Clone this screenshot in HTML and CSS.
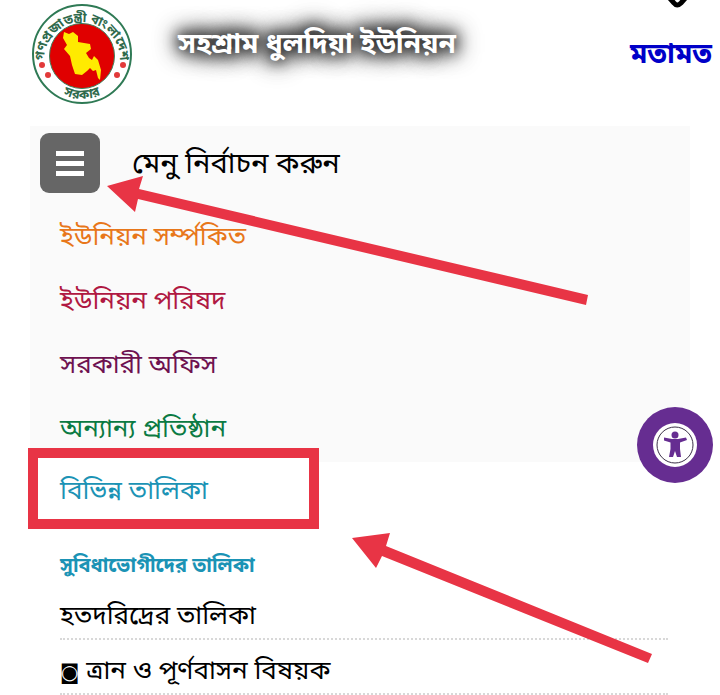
FILE: index.html
```
<!DOCTYPE html>
<html lang="bn">
<head>
    <meta charset="UTF-8">
    <meta name="viewport" content="width=device-width, initial-scale=1.0">
    <title>সহশ্রাম ধুলদিয়া ইউনিয়ন</title>
    <link rel="stylesheet" href="styles.css">
</head>
<body>
    <header class="site-header">
        <svg class="logo" viewBox="0 0 100 100" aria-hidden="true">
            <defs>
                <path id="arc-top" d="M12 56 A38 38 0 1 1 88 56"/>
                <path id="arc-bottom" d="M18 81 A44 44 0 0 0 82 81"/>
            </defs>
            <circle cx="50" cy="50" r="49" fill="#fff" stroke="#2f7a55" stroke-width="2"/>
            <circle cx="50" cy="52" r="32.500" fill="#e00000" stroke="#3f8560" stroke-width="1"/>
            <path d="M32 28 L37 30 L41 28 L46 32 L46 38 L58 40 L59 45 L54 49 L57 54 L60 56 L62 52 L66 56 L69 66 L68 76 L66 74 L64 66 L61 67 L58 64 L55 67 L50 71 L43 70 L40 61 L38 52 L32 45 L35 41 L31 34 Z" fill="#ffea00"/>
            <text class="logo-text" text-anchor="middle"><textPath href="#arc-top" startOffset="50%">গণপ্রজাতন্ত্রী বাংলাদেশ</textPath></text>
            <text class="logo-text" text-anchor="middle"><textPath href="#arc-bottom" startOffset="50%">সরকার</textPath></text>
            <g fill="#e23a3a">
                <circle cx="10" cy="61" r="3"/>
                <circle cx="16" cy="71" r="3"/>
                <circle cx="91" cy="61" r="3"/>
                <circle cx="85" cy="71" r="3"/>
            </g>
        </svg>
        <h1 class="site-title">সহশ্রাম ধুলদিয়া ইউনিয়ন</h1>
        <div class="feedback">
            <svg class="feedback-icon" viewBox="0 0 28 10" aria-hidden="true">
                <path d="M4 -6 L12 3 Q15 7 19 3 L27 -6" fill="none" stroke="#000" stroke-width="5"/>
            </svg>
            <a class="feedback-link" href="#">মতামত</a>
        </div>
    </header>

    <nav class="menu">
        <div class="menu-bar">
            <button class="menu-toggle" id="menu-toggle" type="button" aria-label="মেনু">
                <span class="line"></span>
                <span class="line"></span>
                <span class="line"></span>
            </button>
            <label class="menu-label" for="menu-toggle">মেনু নির্বাচন করুন</label>
            <svg class="arrow arrow-menu" viewBox="107 176 482 130" aria-hidden="true">
                <path d="M107 186 L143 176 L139 189 L588 295 L586 305 L138 199 L135 212 Z"/>
            </svg>
        </div>
        <ul class="menu-list">
            <li><a class="orange" href="#">ইউনিয়ন সর্ম্পকিত</a></li>
            <li><a class="red" href="#">ইউনিয়ন পরিষদ</a></li>
            <li><a class="purple" href="#">সরকারী অফিস</a></li>
            <li><a class="green" href="#">অন্যান্য প্রতিষ্ঠান</a></li>
        </ul>
    </nav>

    <section class="submenu">
        <div class="selected"><a class="blue" href="#">বিভিন্ন তালিকা</a></div>
        <h2 class="submenu-title">সুবিধাভোগীদের তালিকা</h2>
        <ul class="submenu-list">
            <li><a href="#">হতদরিদ্রের তালিকা</a></li>
            <li><a href="#"><span class="bullet">◙</span> ত্রান ও পূর্ণবাসন বিষয়ক</a></li>
        </ul>
        <svg class="arrow arrow-list" viewBox="352 533 300 130" aria-hidden="true">
            <path d="M352 538 L390 533 L386 546 L652 654 L648 663 L382 556 L376 568 Z"/>
        </svg>
    </section>

    <button class="accessibility" type="button" aria-label="Accessibility">
        <svg viewBox="0 0 44 44" aria-hidden="true">
            <circle cx="22" cy="22" r="22" fill="#fff"/>
            <circle cx="22" cy="22" r="18" fill="none" stroke="#3c3148" stroke-width="1"/>
            <circle cx="22" cy="12" r="3.500" fill="#662d91"/>
            <path d="M11 14.500 L19 16 H25 L33 14.500 L34 17 L27 19.500 V26 L28 34 L24 34 L22 28 L20 34 L16 34 L17.500 26 V19.500 L11 17.500 Z" fill="#662d91"/>
        </svg>
    </button>
</body>
</html>
```
FILE: styles.css
```
*,
*::before {
    margin: 0;
    padding: 0;
    box-sizing: border-box;
}

body {
    position: relative;
    background-color: #fff;
    color: #000;
    font-family: "Noto Sans Bengali", "Noto Sans", sans-serif;
    font-size: 26px;
    line-height: 40px;
}

a {
    color: inherit;
    text-decoration: none;
}

ul {
    list-style: none;
}

.site-header {
    display: flex;
    align-items: flex-start;
    height: 126px;
    padding: 0 8px 0 32px;
}

.logo {
    width: 100px;
    height: 100px;
    margin-top: 4px;
    overflow: visible;
}

.logo-text {
    font-size: 13px;
    font-weight: bold;
    fill: #2f6a4c;
}

.site-title {
    flex: 1;
    margin: 26px 0 0 46px;
    font-size: 28px;
    line-height: 40px;
    color: #fff;
    text-shadow: 0 0 14px #000, 0 0 22px #000, 0 0 26px #333;
}

.feedback {
    display: flex;
    flex-direction: column;
    align-items: center;
    gap: 26px;
}

.feedback-icon {
    width: 28px;
    height: 10px;
    margin-left: 10px;
}

.feedback-link {
    color: #0000c8;
    font-size: 28px;
    font-weight: bold;
}

.menu {
    height: 336px;
    margin: 0 30px;
    background-color: #fafafa;
}

.menu-bar {
    position: relative;
    display: flex;
    align-items: center;
    gap: 32px;
    padding: 7px 10px;
}

.menu-toggle {
    display: flex;
    flex-direction: column;
    align-items: center;
    justify-content: center;
    gap: 5px;
    width: 60px;
    height: 60px;
    border: none;
    border-radius: 9px;
    background-color: #666;
    cursor: pointer;
}

.menu-label {
    padding-top: 6px;
    font-size: 29px;
}

.line {
    width: 28px;
    height: 5px;
    background-color: #fff;
}

.menu-list {
    padding: 7px 30px;
}

.menu-list li {
    padding: 12px 0;
}

.orange { color: #e8771a; }
.red { color: #b01842; }
.purple { color: #6e1250; }
.green { color: #0b7a43; }
.blue { color: #1b93b5; }

.submenu {
    position: relative;
    padding: 0 52px 0 60px;
}

.selected {
    position: relative;
    padding: 11px 0 32px;
}

/* frame around the chosen entry */
.selected::before {
    content: "";
    position: absolute;
    left: -32px;
    top: -14px;
    width: 291px;
    height: 81px;
    border: 10px solid #e83445;
    background-color: #fff;
}

.selected a {
    position: relative;
}

.submenu-title {
    font-size: 20px;
    line-height: 44px;
    color: #1b93b5;
}

.submenu-list li {
    padding: 12px 0 0;
    border-bottom: 2px dotted #d8d8d8;
}

.submenu-list li:first-child {
    padding-top: 9px;
}

.bullet {
    font-family: "DejaVu Sans", sans-serif;
    font-size: 20px;
}

.arrow {
    position: absolute;
    fill: #e83445;
    pointer-events: none;
}

.arrow-menu {
    left: 77px;
    top: 50px;
    width: 482px;
    height: 130px;
}

.arrow-list {
    left: 352px;
    top: 71px;
    width: 300px;
    height: 130px;
}

.accessibility {
    position: absolute;
    top: 407px;
    right: 7px;
    display: flex;
    align-items: center;
    justify-content: center;
    width: 76px;
    height: 76px;
    border: none;
    border-radius: 50%;
    background-color: #662d91;
    cursor: pointer;
}

.accessibility svg {
    width: 44px;
    height: 44px;
}
```
